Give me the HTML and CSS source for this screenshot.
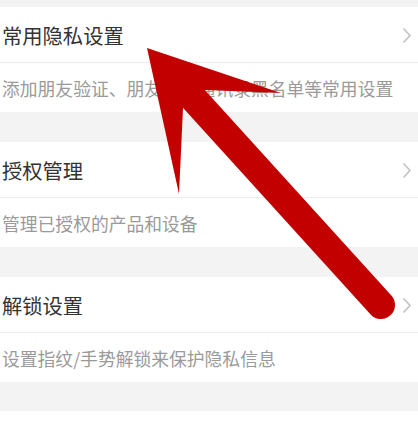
FILE: index.html
```html
<!DOCTYPE html>
<html lang="zh-CN">
<head>
<meta charset="utf-8">
<title>隐私设置</title>
<link rel="stylesheet" href="styles.css">
</head>
<body>
<main class="page">
  <section class="group">
    <div class="row title-row">
      <span class="title">常用隐私设置</span>
      <svg class="chev" width="10" height="17" viewBox="0 0 10 17"><polyline points="1.5,1.5 8,8.5 1.5,15.5" fill="none" stroke="#c2c2c2" stroke-width="1.6"/></svg>
    </div>
    <div class="row desc-row">添加朋友验证、朋友圈和通讯录黑名单等常用设置</div>
  </section>
  <section class="group">
    <div class="row title-row">
      <span class="title">授权管理</span>
      <svg class="chev" width="10" height="17" viewBox="0 0 10 17"><polyline points="1.5,1.5 8,8.5 1.5,15.5" fill="none" stroke="#c2c2c2" stroke-width="1.6"/></svg>
    </div>
    <div class="row desc-row">管理已授权的产品和设备</div>
  </section>
  <section class="group">
    <div class="row title-row">
      <span class="title">解锁设置</span>
      <svg class="chev" width="10" height="17" viewBox="0 0 10 17"><polyline points="1.5,1.5 8,8.5 1.5,15.5" fill="none" stroke="#c2c2c2" stroke-width="1.6"/></svg>
    </div>
    <div class="row desc-row">设置指纹/手势解锁来保护隐私信息</div>
  </section>
  <section class="group last"></section>
</main>
<svg class="arrow" width="418" height="429" viewBox="0 0 418 429">
  <polygon points="147,48 281,93 205,90 183,108 179,194" fill="#c20000"/>
  <line x1="194" y1="99" x2="381" y2="305" stroke="#c20000" stroke-width="28" stroke-linecap="round"/>
</svg>
</body>
</html>
```
FILE: styles.css
```css
html, body {
  margin: 0;
  padding: 0;
}
body {
  background: #f3f3f3;
  width: 418px;
  height: 429px;
  overflow: hidden;
  position: relative;
  font-family: "Noto Sans CJK SC", "Noto Sans", sans-serif;
}
.page {
  padding-top: 7px;
  display: flex;
  flex-direction: column;
  gap: 30px;
}
.group {
  background: #ffffff;
  display: flex;
  flex-direction: column;
}
.group.last {
  margin-top: -1px;
  height: 19px;
}
.row {
  display: flex;
  align-items: center;
  padding: 0 6px 0 2px;
}
.title-row {
  height: 55px;
  justify-content: space-between;
  border-bottom: 1px solid #ececec;
}
.title {
  font-size: 20.3px;
  color: #333333;
}
.chev {
  display: block;
  margin-top: 2px;
}
.desc-row {
  height: 49px;
  font-size: 17.8px;
  color: #9a9a9a;
  white-space: nowrap;
}
.arrow {
  position: absolute;
  left: 0;
  top: 0;
  pointer-events: none;
}
```
